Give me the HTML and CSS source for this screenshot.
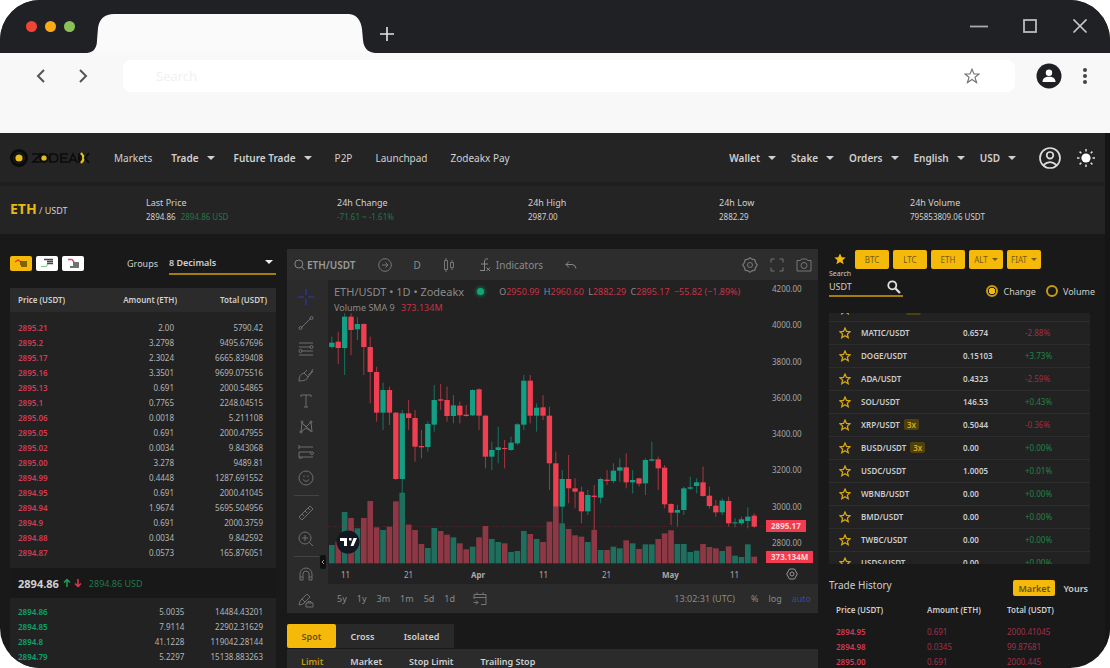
FILE: index.html
```html
<!DOCTYPE html>
<html lang="en">
<head>
<meta charset="utf-8">
<title>Zodeakx ETH/USDT</title>
<link rel="stylesheet" href="styles.css">
</head>
<body>
<div class="window">
  <div class="titlebar">
    <div class="lights"><i class="light red"></i><i class="light amber"></i><i class="light green"></i></div>
    <svg class="tab" viewBox="0 0 288 39"><path d="M0 39Q10 38 10 26L11 14Q13 0 27 0H262Q273 1 275 15L276 26Q277 38 288 39Z" fill="#fafafa"/></svg>
    <button class="plain new-tab" aria-label="New tab"><svg width="14" height="14" viewBox="0 0 14 14"><path d="M7 0V14M0 7H14" stroke="#e4e4e4" stroke-width="1.6"/></svg></button>
    <div class="controls">
      <button class="plain" aria-label="Minimize"><svg width="18" height="16" viewBox="0 0 18 16"><path d="M0 7.500H18" stroke="#aaa" stroke-width="1.800"/></svg></button>
      <button class="plain" aria-label="Maximize"><svg width="16" height="16" viewBox="0 0 16 16"><rect x="2" y="1" width="12" height="12" fill="none" stroke="#bbb" stroke-width="1.8"/></svg></button>
      <button class="plain" aria-label="Close"><svg width="16" height="16" viewBox="0 0 16 16"><path d="M1.500 0.500L14.500 13.500M14.500 0.500L1.500 13.500" stroke="#c8c8c8" stroke-width="1.7"/></svg></button>
    </div>
  </div>
  <div class="toolbar">
    <button class="plain" aria-label="Back"><svg width="10" height="14" viewBox="0 0 10 14"><path d="M8 1L2 7L8 13" fill="none" stroke="#555" stroke-width="2"/></svg></button>
    <button class="plain" aria-label="Forward"><svg width="10" height="14" viewBox="0 0 10 14"><path d="M2 1L8 7L2 13" fill="none" stroke="#555" stroke-width="2"/></svg></button>
    <div class="address">
      <input class="address-input" type="text" aria-label="Address" placeholder="Search">
      <svg width="16" height="16" viewBox="0 0 16 16"><path d="M8 1.200L10 6H15L11 9.200L12.500 14.500L8 11.400L3.500 14.500L5 9.200L1 6H6Z" fill="none" stroke="#777" stroke-width="1.200"/></svg>
    </div>
    <svg width="26" height="26" viewBox="0 0 26 26"><circle cx="13" cy="13" r="12.500" fill="#1f2023"/><circle cx="13" cy="9.800" r="3.200" fill="#fff"/><path d="M6.500 19C6.500 15.500 9 13.800 13 13.800S19.500 15.500 19.500 19Z" fill="#fff"/></svg>
    <svg class="kebab" width="6" height="18" viewBox="0 0 6 18"><g fill="#444"><circle cx="3" cy="3" r="2"/><circle cx="3" cy="9" r="2"/><circle cx="3" cy="15" r="2"/></g></svg>
  </div>

  <div class="app">
    <header class="nav">
      <a class="logo" href="#" aria-label="Zodeakx"><svg width="80" height="20" viewBox="0 0 80 20">
        <circle cx="9" cy="10" r="9" fill="#0b0b0b"/><circle cx="9" cy="10" r="5.400" fill="none" stroke="#222" stroke-width="1"/><circle cx="9" cy="10" r="3.600" fill="#e5bd1c"/>
        <g fill="none" stroke="#0b0b0b" stroke-width="1.600"><path d="M22 6H31L23 14H31"/><circle cx="34" cy="10" r="4"/><path d="M40 6H44C49 6 49 14 44 14H40ZM58 6H51V14H58M51 10H57M59 15L63 6L67 15M61 12H66M69 5V15M74 5L69 10L73 14"/></g>
        <circle cx="34" cy="10" r="2.600" fill="#e5bd1c"/><path d="M71 5Q76 10 71 15" fill="none" stroke="#e5bd1c" stroke-width="2.400"/><path d="M79 5L75 10L79 15" fill="none" stroke="#0b0b0b" stroke-width="2"/></svg></a>
      <nav class="links main-links">
        <a href="#">Markets</a>
        <a href="#" class="strong drop">Trade</a>
        <a href="#" class="strong drop">Future Trade</a>
        <a href="#">P2P</a>
        <a href="#">Launchpad</a>
        <a href="#">Zodeakx Pay</a>
      </nav>
      <nav class="links user-links">
        <a href="#" class="strong drop">Wallet</a>
        <a href="#" class="strong drop">Stake</a>
        <a href="#" class="strong drop">Orders</a>
        <a href="#" class="strong drop">English</a>
        <a href="#" class="strong drop">USD</a>
      </nav>
      <button class="plain" aria-label="Account"><svg width="22" height="22" viewBox="0 0 22 22" fill="none" stroke="#ddd" stroke-width="1.700"><circle cx="11" cy="11" r="10"/><circle cx="11" cy="8.300" r="3.300"/><path d="M4.500 18Q11 12.200 17.500 18"/></svg></button>
      <button class="plain" aria-label="Theme"><svg width="18" height="18" viewBox="0 0 18 18"><circle cx="9" cy="9" r="4.600" fill="#fff"/><path d="M9 0V2.500M9 15.500V18M0 9H2.500M15.500 9H18M2.600 2.600L4.300 4.300M13.700 13.700L15.400 15.400M15.400 2.600L13.700 4.300M4.300 13.700L2.600 15.400" stroke="#ddd" stroke-width="1.500"/></svg></button>
    </header>

    <section class="stats">
      <h1 class="pair"><b>ETH</b> / USDT</h1>
      <div>Last Price<br><span class="stat-value">2894.86 <span class="up stat-usd">2894.86 USD</span></span></div>
      <div>24h Change<br><span class="stat-value up">-71.61 ~ -1.61%</span></div>
      <div>24h High<br><span class="stat-value">2987.00</span></div>
      <div>24h Low<br><span class="stat-value">2882.29</span></div>
      <div>24h Volume<br><span class="stat-value">795853809.06 USDT</span></div>
    </section>

    <main class="columns">
      <section class="book">
        <div class="book-tools">
          <button class="depth active" aria-label="Buy and sell"><svg width="16" height="10" viewBox="0 0 16 10"><path d="M2 4L5 2L8 4" fill="none" stroke="#e8432e" stroke-width="1.500"/><path d="M7 4H14M7 6H14M8 8H14" stroke="#5a470a" stroke-width="1.400"/></svg></button>
          <button class="depth" aria-label="Buy"><svg width="16" height="10" viewBox="0 0 16 10"><path d="M5 1.500H14M8 3.500H14M8 5.500H14" stroke="#444" stroke-width="1.400"/><path d="M2 8.500H7L9 6" fill="none" stroke="#7fc87f" stroke-width="1.200"/></svg></button>
          <button class="depth" aria-label="Sell"><svg width="16" height="10" viewBox="0 0 16 10"><path d="M3 1.500H7L9 4" fill="none" stroke="#e04a68" stroke-width="1.500"/><path d="M8 5H14M8 7H14M5 9H14" stroke="#444" stroke-width="1.300"/></svg></button>
          <label class="groups" for="decimals">Groups</label>
          <div class="select-wrap"><select id="decimals" class="decimals"><option>8 Decimals</option></select></div>
        </div>
        <table class="orders">
          <thead><tr><th>Price (USDT)</th><th>Amount (ETH)</th><th>Total (USDT)</th></tr></thead>
          <tbody id="asks" class="down"></tbody>
        </table>
        <div class="last"><b>2894.86</b>
          <svg width="22" height="10" viewBox="0 0 22 10" fill="none" stroke-width="1.500"><path d="M4 9V1.500M1 4.500L4 1.500L7 4.500" stroke="#1e9e5a"/><path d="M15 1V8.500M12 5.500L15 8.500L18 5.500" stroke="#e0384f"/></svg>
          <span class="up">2894.86 USD</span></div>
        <table class="orders bids"><tbody id="bids" class="buy"></tbody></table>
      </section>

      <section class="center">
        <div class="chart">
          <div class="chart-top">
            <button class="plain symbol"><svg width="11" height="12" viewBox="0 0 11 12" fill="none" stroke="#888"><circle cx="4.800" cy="5" r="4"/><path d="M7.800 8L10.500 11"/></svg>ETH/USDT</button>
            <button class="plain" aria-label="Compare"><svg width="14" height="14" viewBox="0 0 14 14" fill="none" stroke="#777"><circle cx="7" cy="7" r="6.300"/><path d="M4 7H10M7.500 4.500L10 7L7.500 9.500"/></svg></button>
            <button class="plain">D</button>
            <button class="plain" aria-label="Candles"><svg width="12" height="14" viewBox="0 0 12 14" fill="none" stroke="#777"><path d="M1.500 2.500H4.500V11.500H1.500ZM3 0V2.500M3 11.500V14M7.500 4.500H10.500V9.500H7.500ZM9 2V4.500M9 9.500V12"/></svg></button>
            <button class="plain indicators"><svg width="11" height="14" viewBox="0 0 11 14" fill="none" stroke="#888"><path d="M8 1Q4.500 0 4.500 4V12M1 6H8M0 12.500H5M6.500 9.500L10 13M10 9.500L6.500 13"/></svg>Indicators</button>
            <button class="plain undo" aria-label="Undo"><svg width="12" height="8" viewBox="0 0 12 8" fill="none" stroke="#888"><path d="M4 0.500L1 3.500L4 6.500M1 3.500H7Q10.500 3.500 11 7.500"/></svg></button>
            <div class="chart-actions">
              <button class="plain" aria-label="Settings"><svg width="16" height="16" viewBox="0 0 16 16" fill="none" stroke="#777"><path d="M8 0.800L10 2.200L12.800 2.800L13.600 5.500L15.200 8L13.600 10.500L12.800 13.200L10 13.800L8 15.200L6 13.800L3.200 13.200L2.400 10.500L0.800 8L2.400 5.500L3.200 2.800L6 2.200Z" stroke-width="1.300"/><circle cx="8" cy="8" r="2.500"/></svg></button>
              <button class="plain" aria-label="Fullscreen"><svg width="14" height="14" viewBox="0 0 14 14" fill="none" stroke="#777"><path d="M1 4.500V1H4.500M9.500 1H13V4.500M13 9.500V13H9.500M4.500 13H1V9.500"/></svg></button>
              <button class="plain" aria-label="Snapshot"><svg width="16" height="14" viewBox="0 0 16 14" fill="none" stroke="#777"><path d="M1 2.500H4.500L5.500 1H10.500L11.500 2.500H15V13H1Z"/><circle cx="8" cy="7.500" r="3"/></svg></button>
            </div>
          </div>
          <div class="chart-side" id="tools"></div>
          <div class="plot">
            <svg id="candles" class="candles" viewBox="0 0 1311 852" preserveAspectRatio="none"></svg>
            <div class="legend">
              <div class="legend-title"><span class="legend-name">ETH/USDT • 1D • Zodeakx</span><i class="live"></i><span class="ohlc">O<b>2950.99</b> H<b>2960.60</b> L<b>2882.29</b> C<b>2895.17</b> <b>−55.82 (−1.89%)</b></span></div>
              <div class="legend-volume">Volume SMA 9 <b>373.134M</b></div>
            </div>
            <svg class="tv" width="24" height="24" viewBox="0 0 24 24"><circle cx="12" cy="12" r="11.500" fill="#131722"/><path d="M4 8H11V16H8V11H4ZM13 8H15.500V10.500H13ZM17.500 8H21L17.500 16H14.500Z" fill="#fff"/></svg>
            <button class="plain collapse" aria-label="Hide toolbar"><svg width="6" height="14" viewBox="0 0 6 14"><rect width="6" height="14" rx="2" fill="#101010"/><path d="M4 5L2 7L4 9" fill="none" stroke="#999"/></svg></button>
          </div>
          <div class="axis">
            <span>4200.00</span><span>4000.00</span><span>3800.00</span><span>3600.00</span><span>3400.00</span><span>3200.00</span><span>3000.00</span><span>2800.00</span>
            <b class="tag price-tag">2895.17</b><b class="tag volume-tag">373.134M</b>
          </div>
          <div class="times"><span>11</span><span>21</span><b>Apr</b><span>11</span><span>21</span><b>May</b><span>11</span></div>
          <button class="plain axis-settings" aria-label="Axis settings"><svg width="12" height="12" viewBox="0 0 12 12" fill="none" stroke="#999"><path d="M3.500 1H8.500L11.300 6L8.500 11H3.500L0.700 6Z"/><circle cx="6" cy="6" r="2"/></svg></button>
          <div class="ranges">
            <button class="plain">5y</button><button class="plain">1y</button><button class="plain">3m</button><button class="plain">1m</button><button class="plain">5d</button><button class="plain">1d</button>
            <button class="plain goto" aria-label="Go to date"><svg width="14" height="14" viewBox="0 0 14 14" fill="none" stroke="#777"><path d="M1 7V2.500H13V12.500H8M1 5.500H13M4 0.500V3M10 0.500V3M0.500 10.500H5M3 8.500L5 10.500L3 12.500"/></svg></button>
            <span class="clock">13:02:31 (UTC)</span><button class="plain percent">%</button><button class="plain">log</button><button class="plain auto">auto</button>
          </div>
        </div>
        <div class="modes"><button class="mode active">Spot</button><button class="mode">Cross</button><button class="mode">Isolated</button></div>
        <div class="types"><button class="plain chosen">Limit</button><button class="plain">Market</button><button class="plain">Stop Limit</button><button class="plain">Trailing Stop</button></div>
      </section>

      <section class="market">
        <div class="quotes">
          <svg class="favourite" width="12" height="12" viewBox="0 0 16 16"><path d="M8 0.500L10.300 5.600L15.500 6L11.500 9.600L12.800 15L8 12L3.200 15L4.500 9.600L0.500 6L5.700 5.600Z" fill="#f0b90b"/></svg>
          <button class="quote">BTC</button><button class="quote">LTC</button><button class="quote">ETH</button><button class="quote drop">ALT</button><button class="quote drop">FIAT</button>
        </div>
        <div class="filter">
          <div class="search"><label for="search">Search</label><div class="search-row"><input id="search" type="text" value="USDT"><svg width="14" height="14" viewBox="0 0 14 14" fill="none" stroke="#e2e2e2"><circle cx="5.300" cy="5.300" r="4" stroke-width="1.800"/><path d="M8.500 8.500L13 13" stroke-width="2.200"/></svg></div></div>
          <label class="radio"><input type="radio" name="metric" checked>Change</label>
          <label class="radio"><input type="radio" name="metric">Volume</label>
        </div>
        <div class="pairs-view"><table class="pairs"><tbody id="pairs"></tbody></table></div>
        <div class="history-head"><h2>Trade History</h2><button class="toggle active">Market</button><button class="toggle">Yours</button></div>
        <table class="history">
          <thead><tr><th>Price (USDT)</th><th>Amount (ETH)</th><th>Total (USDT)</th></tr></thead>
          <tbody id="history" class="down"></tbody>
        </table>
      </section>
    </main>
  </div>
</div>
<script src="app.js"></script>
</body>
</html>
```
FILE: styles.css
```css
* { box-sizing: border-box; }
body { margin: 0; background: #fff; font-family: "Noto Sans", "Open Sans", sans-serif; font-size: 10px; color: #d0d0d0; }
button, input, select { font: inherit; color: inherit; }
button { cursor: pointer; }
svg { display: block; flex: none; }
a { color: inherit; text-decoration: none; }
table { border-collapse: collapse; width: 100%; table-layout: fixed; }
th, td { padding: 0; }
.plain { display: flex; align-items: center; padding: 0; border: 0; background: none; }
.up { color: #21774c; }

.window { display: flex; flex-direction: column; height: 100vh; overflow: hidden; border-radius: 40px; background: #191919; }
.titlebar { display: flex; align-items: flex-end; flex: none; height: 53px; background: #202124; }
.lights { display: flex; gap: 8px; align-self: center; width: 87px; padding-left: 26px; }
.light { width: 11px; height: 11px; border-radius: 50%; }
.red { background: #ef4438; }
.amber { background: #fdab14; }
.green { background: #8bc158; }
.tab { width: 288px; height: 39px; }
.new-tab { padding: 0 0 12px 5px; }
.controls { display: flex; gap: 34px; align-self: center; margin-left: auto; padding-right: 22px; }
.toolbar { display: flex; align-items: flex-start; flex: none; height: 80px; padding: 7px 22px 0 36px; background: #f8f8f8; }
.toolbar > .plain { height: 32px; width: 42px; }
.address { display: flex; align-items: center; flex: 1; height: 32px; margin: 0 21px 0 3px; padding: 0 35px 0 33px; border-radius: 8px; background: #fff; }
.address-input { flex: 1; border: 0; outline: 0; padding: 0; background: none; font-size: 13px; }
.address-input::placeholder { color: #f1f1f1; }
.toolbar > svg { margin-top: 3px; }
.toolbar > .kebab { margin: 7px 0 0 20px; }

.app { display: flex; flex-direction: column; flex: 1; min-height: 0; border-right: 5px solid #151515; }
.nav { display: flex; align-items: center; flex: none; height: 50px; padding: 0 10px; background: #242424; border-bottom: 1px solid #1f1f1f; }
.logo { width: 104px; }
.links { display: flex; white-space: nowrap; }
.main-links { gap: 19px; }
.main-links a:nth-child(n+4) { margin-left: 4px; }
.user-links { gap: 15px; margin-left: auto; }
.user-links + .plain { margin: 0 16px 0 23px; }
.strong { font-weight: 600; }
.drop::after { content: ""; display: inline-block; margin-left: 8px; vertical-align: 2px; border: 4px solid transparent; border-top-color: currentColor; border-bottom: 0; }

.stats { display: grid; grid-template-columns: 136px repeat(5, 1fr); align-items: center; flex: none; height: 51px; margin-bottom: 15px; padding: 0 4px 0 10px; border-top: 3px solid #1f1f1f; background: #242424; line-height: 14px; font-size: 9px; }
.stats > div { white-space: nowrap; }
.stat-value { font-size: 8px; }
.stat-usd { margin-left: 3px; }
.pair { margin: 0; font-size: 9px; font-weight: 400; }
.pair b { font-size: 14px; color: #e8b914; }

.columns { display: grid; grid-template-columns: 266px minmax(0, 1fr) 276px; gap: 11px; flex: 1; min-height: 0; padding-left: 10px; }
.book-tools { display: flex; align-items: center; height: 28px; margin-bottom: 11px; gap: 4px; }
.depth { display: flex; align-items: center; justify-content: center; width: 22px; height: 15px; padding: 0; border: 0; border-radius: 2px; background: #fff; }
.active { background: #f5ba09; }
.groups { margin: 0 7px 0 auto; font-size: 9px; }
.select-wrap { position: relative; width: 107px; border-bottom: 2px solid #a37d0d; }
.select-wrap::after { content: ""; position: absolute; right: 3px; top: 8px; border: 4px solid transparent; border-top-color: #eee; border-bottom: 0; pointer-events: none; }
.decimals { width: 100%; height: 21px; padding: 0; border: 0; appearance: none; background: none; font-size: 9px; font-weight: 600; }
.orders { background: #222; font-size: 8px; text-align: right; }
.orders tr { height: 15px; }
.orders thead tr { height: 24px; background: #2b2b2b; }
.orders th, .orders td { font-weight: 400; line-height: 14px; }
.orders th { font-weight: 600; }
.orders th:nth-child(1) { width: 68px; padding-left: 8px; text-align: left; }
.orders td:nth-child(1) { width: 68px; padding-left: 8px; text-align: left; font-weight: 600; }
.orders th:nth-child(3) { padding-right: 9px; }
.orders td:nth-child(3) { padding-right: 13px; }
.orders td:nth-child(2) { padding-right: 3px; }
.orders tbody::before, .orders tbody::after { content: ""; display: block; height: 8px; }
.bids tbody::before { height: 6px; }
.orders td:nth-child(n+2) { color: #b4b4b4; }
.down td:first-child { color: #d23a53; }
.buy td:first-child { color: #0ca56c; }
.last { display: flex; align-items: center; gap: 4px; height: 30px; padding-left: 8px; background: #181818; font-size: 9px; }
.last b { font-size: 11px; }

.chart { display: grid; grid-template: 31px 284px 20px 29px / 41px minmax(0, 1fr) 53px; grid-template-areas: "top top top" "side plot axis" "side times corner" "side ranges ranges"; background: #2b2b2b; color: #8a8a8a; margin-bottom: 11px; }
.chart-top { grid-area: top; display: flex; align-items: center; padding: 0 6px 0 7px; gap: 22px; background: #2d2d2d; }
.symbol { gap: 2px; color: #999; font-weight: 600; }
.indicators { gap: 5px; margin-left: 3px; }
.chart-actions { display: flex; gap: 12px; margin-left: auto; }
.chart-side { grid-area: side; display: flex; flex-direction: column; align-items: center; padding: 4px 3px 0 0; }
.chart-side .plain { height: 26px; color: #6e6e6e; }
.chart-side .cross { color: #3437b8; }
.chart-side hr { width: 25px; margin: 4px 0; border: 0; border-top: 1px solid #444; }
.plot { grid-area: plot; position: relative; background: #222; }
.candles { width: 100%; height: 100%; }
.legend { position: absolute; left: 6px; top: 4px; }
.legend-title { display: flex; align-items: center; white-space: nowrap; line-height: 15px; }
.legend-name { font-size: 11px; }
.live { width: 7px; height: 7px; margin: 0 15px 0 13px; border-radius: 50%; background: #0fa770; box-shadow: 0 0 4px #0fa770; }
.ohlc { font-size: 9px; }
.ohlc b, .legend-volume b { color: #c53346; font-weight: 400; }
.ohlc b { margin-right: 2px; }
.legend-volume { font-size: 9px; line-height: 18px; }
.legend-volume b { margin-left: 4px; }
.tv { position: absolute; left: 8px; bottom: 10px; }
.collapse { position: absolute; left: -8px; bottom: -5px; }
.axis { grid-area: axis; position: relative; display: flex; flex-direction: column; justify-content: space-between; padding: 3px 0 15px 7px; background: #222; font-size: 8px; line-height: 12px; color: #a5a5a5; }
.tag { position: absolute; left: 1px; padding: 0 5px; background: #f23b4f; color: #fbd3d7; }
.price-tag { top: 240px; }
.volume-tag { top: 271px; }
.times { grid-area: times; display: grid; grid-template-columns: 63fr 67fr 68fr 63fr 60fr 68fr 35fr; align-items: center; padding-left: 13px; background: #222; font-size: 8px; color: #aaa; }
.axis-settings { grid-area: corner; justify-content: center; background: #222; }
.ranges { grid-area: ranges; display: flex; align-items: center; gap: 10px; padding: 0 7px 0 9px; font-size: 9px; }
.goto { margin-left: 8px; }
.clock { margin-left: auto; }
.percent { padding-left: 6px; }
.auto { color: #2b49b5; }
.modes { display: flex; width: 167px; height: 24px; margin-bottom: 1px; background: #292929; }
.mode { flex: auto; padding: 0; border: 0; border-radius: 2px; background: none; font-size: 9px; font-weight: 600; }
.mode.active { flex: none; width: 49px; background: #f5ba09; color: #67500c; }
.types { display: flex; gap: 27px; height: 100px; padding: 4px 14px; background: #2b2b2b; font-size: 9px; font-weight: 600; }
.types .plain { height: 16px; }
.chosen { color: #c29a17; }

.market { color: #ccc; }
.quotes { display: flex; align-items: center; gap: 4px; height: 20px; padding-left: 5px; }
.favourite { margin-right: 5px; }
.quote { width: 34px; height: 19px; padding: 0; border: 0; border-radius: 2px; background: #f5ba09; color: #765b0c; font-size: 8px; }
.quote.drop::after { margin-left: 4px; border-width: 3px; border-bottom: 0; }
.filter { display: flex; align-items: center; height: 44px; padding-right: 10px; font-size: 9px; }
.search { width: 74px; margin: 0 auto 16px 0; border-bottom: 2px solid #a37d0d; font-size: 7px; line-height: 10px; }
.search-row { display: flex; align-items: center; height: 16px; padding-right: 2px; }
.search-row input { flex: 1; min-width: 0; padding: 0; border: 0; outline: 0; background: none; font-size: 9px; }
.radio { display: flex; align-items: center; gap: 5px; margin-right: 10px; }
.radio:last-child { margin-right: 0; }
.radio input { width: 12px; height: 12px; margin: 0; appearance: none; border: 2px solid #c79a12; border-radius: 50%; }
.radio input:checked { background: radial-gradient(#f0b90b 0 3px, #191919 3px); }
.pairs-view { height: 251px; width: 261px; overflow: hidden; background: #222; }
.pairs { margin-top: -15px; font-size: 8px; font-weight: 600; }
.pairs tr { height: 23px; border-bottom: 1px solid #2d2d2d; }
.pairs td:nth-child(1) { width: 32px; padding-left: 10px; }
.pairs td:nth-child(2) { width: 102px; }
.pairs td:nth-child(3) { width: 62px; }
.pairs td:nth-child(4) { font-weight: 400; }
.pairs .fall { color: #a62b40; }
.pairs .rise { color: #1d8549; }
.badge { margin-left: 4px; padding: 0 3px; border-radius: 2px; background: #4f400f; color: #d8aa16; }
.history-head { display: flex; align-items: center; height: 32px; width: 261px; margin-top: 8px; gap: 8px; font-size: 9px; }
.history-head h2 { flex: 1; margin: 0 0 6px; font-size: 10px; font-weight: 400; }
.toggle { height: 16px; padding: 0; border: 0; border-radius: 2px; background: none; font-weight: 600; }
.toggle:last-child { padding-right: 2px; }
.toggle.active { width: 42px; background: #f5ba09; color: #67500c; }
.history { font-size: 8px; text-align: left; }
.history tr { height: 15px; }
.history thead tr { height: 20px; }
.history th { font-weight: 600; vertical-align: top; }
.history th:first-child { width: 98px; padding-left: 7px; }
.history td:first-child { padding-left: 7px; font-weight: 600; }
.history th:nth-child(2) { width: 80px; }
.history td { color: #a3304a; }
```
FILE: app.js
```js
const rows = (id, text) => {
  document.getElementById(id).innerHTML = text.split("\n").map(line =>
    "<tr>" + line.split(" ").map(cell => `<td>${cell}</td>`).join("") + "</tr>").join("");
};

rows("asks", `2895.21 2.00 5790.42
2895.2 3.2798 9495.67696
2895.17 2.3024 6665.839408
2895.16 3.3501 9699.075516
2895.13 0.691 2000.54865
2895.1 0.7765 2248.04515
2895.06 0.0018 5.211108
2895.05 0.691 2000.47955
2895.02 0.0034 9.843068
2895.00 3.278 9489.81
2894.99 0.4448 1287.691552
2894.95 0.691 2000.41045
2894.94 1.9674 5695.504956
2894.9 0.691 2000.3759
2894.88 0.0034 9.842592
2894.87 0.0573 165.876051`);
rows("bids", `2894.86 5.0035 14484.43201
2894.85 7.9114 22902.31629
2894.8 41.1228 119042.28144
2894.79 5.2297 15138.883263`);
rows("history", `2894.95 0.691 2000.41045
2894.98 0.0345 99.87681
2895.00 0.691 2000.445`);

const pairs = [
  ["BNB/USDT", "0.00", "+0.00%", "3x"], ["MATIC/USDT", "0.6574", "-2.88%"], ["DOGE/USDT", "0.15103", "+3.73%"],
  ["ADA/USDT", "0.4323", "-2.59%"], ["SOL/USDT", "146.53", "+0.43%"], ["XRP/USDT", "0.5044", "-0.36%", "3x"],
  ["BUSD/USDT", "0.00", "+0.00%", "3x"], ["USDC/USDT", "1.0005", "+0.01%"], ["WBNB/USDT", "0.00", "+0.00%"],
  ["BMD/USDT", "0.00", "+0.00%"], ["TWBC/USDT", "0.00", "+0.00%"], ["USDS/USDT", "0.00", "+0.00%"]
];
const star = '<svg width="12" height="12" viewBox="0 0 16 16"><path d="M8 1.500L10 6L14.800 6.400L11.200 9.500L12.300 14.300L8 11.700L3.700 14.300L4.800 9.500L1.200 6.400L6 6Z" fill="none" stroke="#d9a810" stroke-width="1.700"/></svg>';
document.getElementById("pairs").innerHTML = pairs.map(([name, price, change, lever]) =>
  `<tr><td>${star}</td><td>${name}${lever ? `<span class="badge">${lever}</span>` : ""}</td><td>${price}</td><td class="${change[0] === "-" ? "fall" : "rise"}">${change}</td></tr>`).join("");

const tools = [
  ["Crosshair", "M8 0V6M8 10V16M0 8H6M10 8H16", "cross"],
  ["Trend line", "M3 13L13 3M1 13a1.500 1.500 0 1 0 3 0a1.500 1.500 0 1 0 -3 0M12 3a1.500 1.500 0 1 0 3 0a1.500 1.500 0 1 0 -3 0"],
  ["Fibonacci", "M1 2H15M1 6H13M3 10H15M1 14H15M12 6a1.500 1.500 0 1 0 3 0a1.500 1.500 0 1 0 -3 0M1 10a1.500 1.500 0 1 0 3 0a1.500 1.500 0 1 0 -3 0"],
  ["Brush", "M1 14Q1 7 6 6L10 10Q9 14 1 14ZM6 6L9 3M10 10L15 4M10 8Q12 8 15 2"],
  ["Text", "M3 4V2H13V4M8 2V14M6 14H10"],
  ["Pattern", "M3 13L4 4L8 8L13 3L14 13L8 9L3 13M4 4L13 12M2 13a1 1 0 1 0 2 0a1 1 0 1 0 -2 0M3 3a1 1 0 1 0 2 0a1 1 0 1 0 -2 0M12 3a1 1 0 1 0 2 0a1 1 0 1 0 -2 0"],
  ["Position", "M1 3H15M1 8H15M1 13H15M1 1V5M1 8V13M13 8a1.500 1.500 0 1 0 2 0M1 13a1.500 1.500 0 1 0 3 0"],
  ["Emoji", "M1 8a7 7 0 1 0 14 0a7 7 0 1 0 -14 0M5 9.500Q8 13 11 9.500M6 5.500V7M10 5.500V7"],
  null,
  ["Measure", "M1 12L12 1L15 4L4 15ZM4 9L6 11M7 6L9 8M10 3L12 5"],
  ["Zoom in", "M1 7a6 6 0 1 0 12 0a6 6 0 1 0 -12 0M11.500 11.500L15 15M7 4V10M4 7H10"],
  null,
  ["Magnet", "M2 14V8A6 6 0 0 1 14 8V14H11V8A3 3 0 0 0 5 8V14ZM2 11H5M11 11H14"],
  ["Lock drawings", "M1 13L2 9L9 2L12 5L5 12ZM8 11H15V15H8ZM10 11V9.500H13V11M4 7L7 10"]
];
document.getElementById("tools").innerHTML = tools.map(tool => tool
  ? `<button class="plain ${tool[2] || ""}" aria-label="${tool[0]}"><svg width="16" height="16" viewBox="0 0 16 16" fill="none" stroke="currentColor"><path d="${tool[1]}"/></svg></button>`
  : "<hr>").join("");

// direction, body top, body bottom, wick top, wick bottom, volume top
const candles = `g 188 201 170 205 795|r 185 204 155 252 785|g 110 204 100 285 696|r 110 150 100 225 714|g 132 148 112 180 745
r 132 201 130 285 714|r 201 276 170 370 663|r 276 398 260 425 742|g 330 398 308 450 750|r 330 398 320 435 740
r 398 597 396 600 664|g 400 597 390 640 638|r 400 414 360 450 734|r 414 500 390 545 750|r 498 502 450 535 792
g 432 501 425 515 804|g 360 434 315 455 744|r 358 362 312 390 753|r 360 408 320 425 764|g 376 408 345 430 772
r 377 406 365 430 790|r 404 408 375 410 808|g 330 406 328 408 800|r 328 407 325 450 772|r 407 530 405 565 738
g 510 530 485 570 777|g 502 510 440 550 786|r 504 507 480 565 790|g 488 510 470 512 816|g 433 490 430 495 813
g 302 434 285 450 753|r 302 407 285 430 762|g 383 407 370 455 777|r 382 407 345 420 786|r 407 550 380 630 725
r 550 680 515 682 680|g 597 680 570 730 730|r 597 625 525 670 747|r 625 635 595 685 766|r 635 694 620 730 770
g 645 694 630 705 786|r 647 651 615 750 750|g 597 653 593 670 810|r 599 603 570 615 810|g 572 603 550 610 800
g 562 572 535 605 805|r 562 607 520 625 781|g 600 607 570 640 790|r 595 611 593 620 807|g 540 610 535 645 793
g 538 542 485 545 793|r 538 565 530 630 777|r 563 673 555 685 760|r 672 698 670 735 751|g 690 698 675 740 792
g 625 690 620 705 792|g 622 626 590 630 816|g 607 618 595 640 812|r 607 648 560 650 792|r 647 678 620 685 801
r 677 697 660 710 805|g 662 697 655 705 813|r 663 730 650 740 799|g 727 730 715 742 827|g 718 730 710 735 831
g 710 723 682 745 793|r 707 740 700 743 830`.split(/[|\n]/).map(line => line.split(" "));

const fill = { g: "#149e83", r: "#ef3f51" };
const volume = { g: "#1f6f5e", r: "#8f3845" };
const bars = candles.map(([side, , , , , top], i) =>
  `<rect x="${3 + i * 19.2}" y="${top}" width="17" height="${850 - top}" fill="${volume[side]}"/>`);
const bodies = candles.map(([side, top, bottom, high, low], i) => {
  const x = 11.5 + i * 19.2;
  return `<rect x="${x - 1.5}" y="${high}" width="3" height="${low - high}" fill="${fill[side]}" opacity=".65"/>` +
    `<rect x="${x - 8}" y="${top}" width="16" height="${bottom - top}" fill="${fill[side]}"/>`;
});
document.getElementById("candles").innerHTML = bars.join("") +
  '<path d="M0 740H1311" stroke="#a62d3e" stroke-width="2" stroke-dasharray="3 4" opacity=".6"/>' + bodies.join("");
```
